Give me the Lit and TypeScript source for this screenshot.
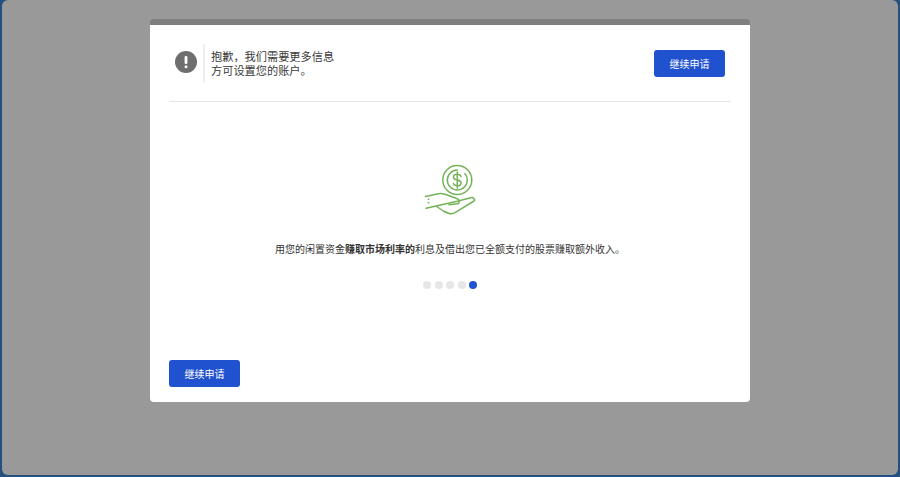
import { LitElement, html, css } from 'lit';
import { customElement } from 'lit/decorators.js';

@customElement('app-root')
export class AppRoot extends LitElement {
  static styles = css`
    :host {
      display: block;
      width: 900px;
      height: 477px;
      overflow: hidden;
      background: #24507f;
      font-family: 'Liberation Sans', 'Noto Sans CJK SC', sans-serif;
      color: #333;
    }
    .overlay {
      box-sizing: border-box;
      height: 475px;
      width: 896px;
      margin: 0 2px;
      padding-top: 19px;
      background: #999;
      border-radius: 6px;
      display: flex;
      justify-content: center;
      align-items: flex-start;
    }
    .modal {
      box-sizing: border-box;
      width: 600px;
      height: 383px;
      background: #fff;
      border-top: 6px solid #7f7f7f;
      border-radius: 4px;
      padding: 0 19px 15px;
      display: flex;
      flex-direction: column;
    }
    .head {
      height: 76px;
      flex: none;
      display: flex;
      align-items: center;
      border-bottom: 1px solid #e6e6e6;
      padding: 0 6px;
    }
    .alert {
      width: 22px;
      height: 22px;
      flex: none;
      margin-right: 6px;
      margin-bottom: 2px;
    }
    .msg {
      flex: 1;
      border-left: 2px solid #f0f0f0;
      padding: 6px 0 5px 6px;
      font-size: 11.2px;
      line-height: 14px;
      color: #3a3a3a;
      height: 28px;
    }
    button {
      width: 71px;
      height: 27px;
      padding: 0;
      border: none;
      border-radius: 3px;
      background: #2052cf;
      color: #fff;
      font: inherit;
      font-size: 10px;
    }
    .body {
      flex: 1;
      display: flex;
      flex-direction: column;
      align-items: center;
      padding-top: 61px;
    }
    .coin {
      width: 52px;
      height: 52px;
    }
    .body p {
      margin: 26.5px 0 0;
      font-size: 10px;
      line-height: 16px;
      color: #333;
    }
    .dots {
      display: flex;
      gap: 3.5px;
      margin-top: 23.5px;
    }
    .dots span {
      width: 8px;
      height: 8px;
      border-radius: 50%;
      background: #e6e6e6;
    }
    .dots span.on {
      background: #2052cf;
    }
    .foot {
      flex: none;
    }
  `;

  private dots = [0, 1, 2, 3, 4];

  render() {
    return html`
      <div class="overlay">
        <div class="modal">
          <div class="head">
            <svg class="alert" viewBox="0 0 22 22">
              <circle cx="11" cy="11" r="11" fill="#6e6e6e" />
              <rect x="9.6" y="5" width="2.8" height="8" rx="1.2" fill="#fff" />
              <circle cx="11" cy="15.8" r="1.5" fill="#fff" />
            </svg>
            <div class="msg">抱歉，我们需要更多信息<br />方可设置您的账户。</div>
            <button>继续申请</button>
          </div>
          <div class="body">
            <svg class="coin" viewBox="0 0 52 52" fill="none" stroke="#74b35a" stroke-width="1.5" stroke-linecap="round" stroke-linejoin="round">
              <circle cx="33.300" cy="17" r="14.500" />
              <path d="M33.300 7a10 10 0 1 0 10 10 10 10 0 0 0-2.400-6.500" />
              <path d="M37 13.500c-.6-1.500-2-2.200-3.700-2.200-2.200 0-3.800 1.200-3.800 2.900s1.600 2.400 3.800 2.800 3.800 1.200 3.800 2.900-1.600 2.900-3.800 2.900c-1.900 0-3.300-.8-3.900-2.300M33.300 9v16" />
              <path d="M1.500 33.500l12.800-2.800c2.500-.3 4.700 0 6.700.6l12.300 4.400c2.700 1 2.500 4.700 0 5l-8.300 1" />
              <path d="M34.300 38l12.400-3.300c2.800-.7 4.800 1.500 3.300 3.300L31 49.700c-1.700.9-3.500 1.400-5 1-2.500-.6-4.500-1.500-6.700-2.700L12 43l-10 2.300z" />
              <path d="M4.300 36.300h.5M4.300 39.700h.5" />
            </svg>
            <p>用您的闲置资金<b>赚取市场利率的</b>利息及借出您已全额支付的股票赚取额外收入。</p>
            <div class="dots">
              ${this.dots.map((d) => html`<span class=${d === 4 ? 'on' : ''}></span>`)}
            </div>
          </div>
          <div class="foot"><button>继续申请</button></div>
        </div>
      </div>
    `;
  }
}
